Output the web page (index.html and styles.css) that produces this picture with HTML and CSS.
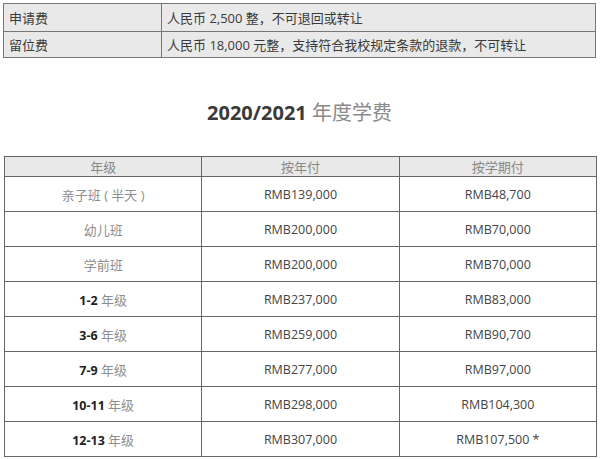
FILE: index.html
```html
<!DOCTYPE html>
<html lang="zh">
<head>
<meta charset="utf-8">
<link rel="stylesheet" href="styles.css">
</head>
<body>
<div class="page">
  <table class="fees">
    <tr class="r1"><td class="k">申请费</td><td class="v">人民币 2,500 整，不可退回或转让</td></tr>
    <tr class="r2"><td class="k">留位费</td><td class="v">人民币 18,000 元整，支持符合我校规定条款的退款，不可转让</td></tr>
  </table>
  <h2 class="title"><span class="yr">2020/2021</span> <span class="cn">年度学费</span></h2>
  <table class="tuition">
    <tr class="head"><th>年级</th><th>按年付</th><th>按学期付</th></tr>
    <tr><td class="cn">亲子班 ( 半天 )</td><td>RMB139,000</td><td>RMB48,700</td></tr>
    <tr><td class="cn">幼儿班</td><td>RMB200,000</td><td>RMB70,000</td></tr>
    <tr><td class="cn">学前班</td><td>RMB200,000</td><td>RMB70,000</td></tr>
    <tr><td><b>1-2</b> <span class="cn">年级</span></td><td>RMB237,000</td><td>RMB83,000</td></tr>
    <tr><td><b>3-6</b> <span class="cn">年级</span></td><td>RMB259,000</td><td>RMB90,700</td></tr>
    <tr><td><b>7-9</b> <span class="cn">年级</span></td><td>RMB277,000</td><td>RMB97,000</td></tr>
    <tr><td><b>10-11</b> <span class="cn">年级</span></td><td>RMB298,000</td><td>RMB104,300</td></tr>
    <tr><td><b>12-13</b> <span class="cn">年级</span></td><td>RMB307,000</td><td>RMB107,500 *</td></tr>
  </table>
</div>
</body>
</html>
```
FILE: styles.css
```css
html, body {
  margin: 0;
  padding: 0;
  background: #fff;
}
body {
  font-family: "Open Sans", "Noto Sans CJK SC", sans-serif;
  color: #444;
}
.page {
  padding: 3px 4px 0 3px;
}
.fees {
  width: 593px;
  border-collapse: collapse;
  background: #e9e9e9;
  font-size: 13px;
  color: #3a3a3a;
}
.fees td {
  border: 1px solid #777;
  padding: 0 0 0 5px;
  line-height: 18px;
}
.fees .r1 td { height: 27px; }
.fees .r2 td { height: 25px; }
.fees .k { width: 152px; }
.title {
  margin: 43px 0 31px;
  text-align: center;
  font-size: 20px;
  line-height: 24px;
  font-weight: normal;
}
.title .yr {
  font-weight: 700;
  color: #3a3a3a;
}
.title .cn {
  color: #8a8a8a;
}
.tuition {
  width: 593px;
  margin-left: 1px;
  border-collapse: collapse;
  table-layout: fixed;
  font-size: 12.5px;
  color: #444;
}
.tuition th,
.tuition td {
  border: 1px solid #666;
  text-align: center;
  padding: 0;
}
.tuition th {
  height: 19px;
  background: #e9e9e9;
  font-weight: normal;
  color: #888;
  font-size: 13px;
  line-height: 16px;
}
.tuition td {
  height: 34px;
}
.tuition .cn {
  color: #8e8e8e;
  font-size: 13px;
}
.tuition b {
  font-weight: 700;
  color: #222;
}
```
